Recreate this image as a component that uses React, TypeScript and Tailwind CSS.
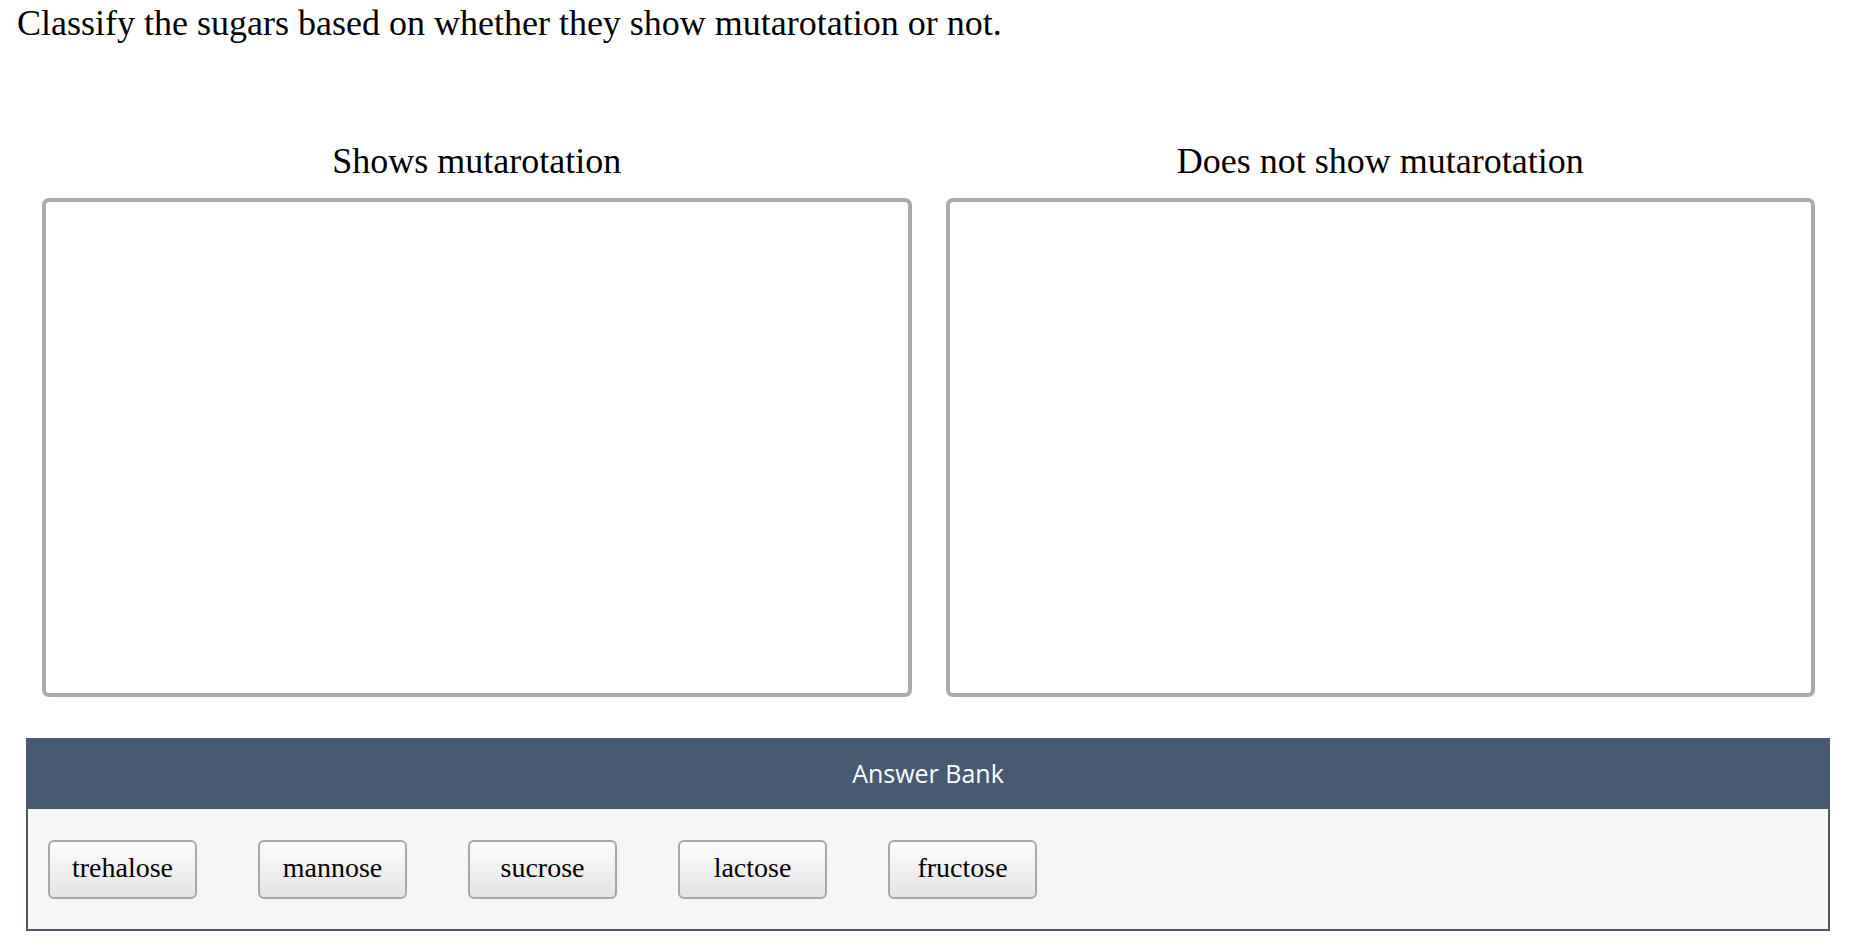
import React from "react";

const items = ["trehalose", "mannose", "sucrose", "lactose", "fructose"];

export default function App() {
  return (
    <div className="w-[1862px] h-[952px] bg-white text-black">
      <div className="font-['Liberation_Serif','Times_New_Roman',serif]">
        <h1 className="pl-[17px] pt-[2px] text-[36px] leading-[42px] font-normal">
          Classify the sugars based on whether they show mutarotation or not.
        </h1>
        <div className="mt-[96px] grid grid-cols-2 gap-[34px] pl-[42px] pr-[47px]">
          {["Shows mutarotation", "Does not show mutarotation"].map((t) => (
            <div key={t} className="flex flex-col">
              <div className="text-center text-[36px] leading-[42px] mb-[16px]">{t}</div>
              <div className="h-[499px] rounded-[7px] border-[4px] border-[#ababab] bg-white" />
            </div>
          ))}
        </div>
        <div className="mt-[41px] ml-[26px] mr-[32px]">
          <div className="h-[71px] bg-[#485a72] flex items-center justify-center">
            <span className="font-['Open_Sans',sans-serif] text-[25px] text-white">Answer Bank</span>
          </div>
          <div className="bg-[#f6f6f6] border-x-2 border-b-2 border-[#485a72] pl-[20px] pt-[31px] pb-[30px] flex gap-[61px]">
            {items.map((it) => (
              <div
                key={it}
                className="w-[149px] h-[59px] pb-[4px] rounded-[6px] border-2 border-[#a8a8a8] bg-gradient-to-b from-[#fdfdfd] to-[#e4e4e4] flex items-center justify-center text-[28px] leading-none text-black"
              >
                {it}
              </div>
            ))}
          </div>
        </div>
      </div>
    </div>
  );
}
